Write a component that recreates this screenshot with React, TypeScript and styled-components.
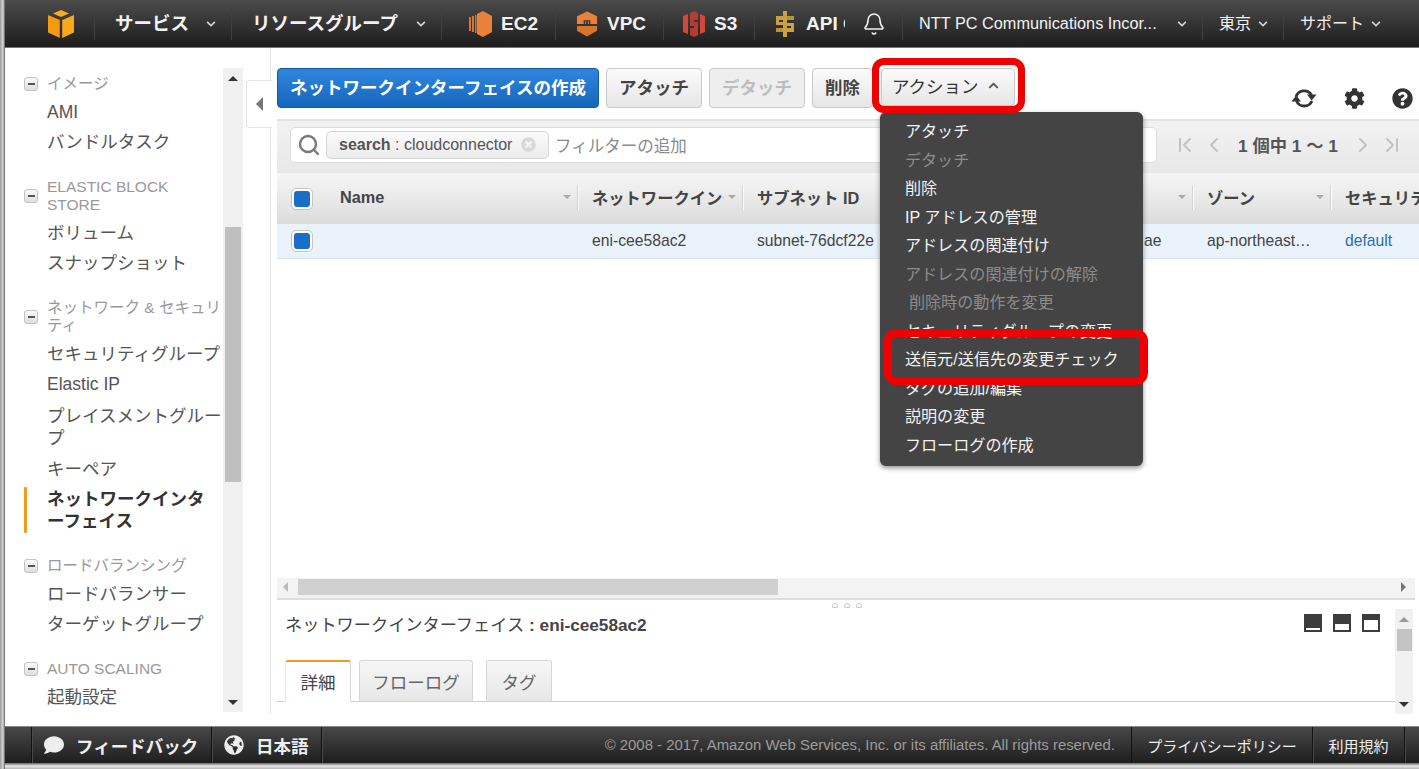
import React from "react";
import styled, { createGlobalStyle } from "styled-components";
import { Bell, ChevronFirst, ChevronLast, ChevronLeft, ChevronRight, Search } from "lucide-react";
import { FaChevronDown, FaChevronUp, FaCog, FaComment, FaGlobeAmericas, FaQuestionCircle, FaTimesCircle } from "react-icons/fa";

const FONT = `"Liberation Sans", "Noto Sans CJK JP", sans-serif`;

const GlobalStyle = createGlobalStyle`
  html, body { margin: 0; padding: 0; background: #fff; }
  body { font-family: ${FONT}; color: #444; }
  * { box-sizing: border-box; }
`;

const Page = styled.div`
  width: 1419px;
  height: 769px;
  overflow: hidden;
  display: flex;
  flex-direction: column;
  padding: 0 0 6px 5px;
  background:
    linear-gradient(90deg, #9a9a9a 0, #d8d8d8 3px, #555 5px, transparent 5px),
    linear-gradient(0deg, #b5b5b5 0, #e8e8e8 3px, #666 6px);
`;

/* ---------- top bar ---------- */
const TopBar = styled.header`
  height: 48px;
  flex-shrink: 0;
  display: flex;
  align-items: center;
  background: linear-gradient(#4b4b4b, #1d1d1d);
  border-bottom: 1px solid #777;
  color: #f2f2f2;
  overflow: hidden;
`;

const NavCell = styled.div<{ $w: number; $bold?: boolean; $size?: number; $pad?: number; $noLine?: boolean }>`
  width: ${(p) => p.$w}px;
  height: 32px;
  flex-shrink: 0;
  display: flex;
  align-items: center;
  justify-content: space-between;
  padding: 0 15px 0 ${(p) => (p.$pad === undefined ? 16 : p.$pad)}px;
  font-size: ${(p) => p.$size || 18.5}px;
  font-weight: ${(p) => (p.$bold ? 700 : 400)};
  white-space: nowrap;
  overflow: hidden;
  border-right: ${(p) => (p.$noLine ? "none" : "1px solid #3f3f3f")};
  svg { flex-shrink: 0; }
`;

const ServiceCell = styled(NavCell)`
  justify-content: flex-start;
  gap: 9px;
  font-size: 19px;
`;

const NavLabel = styled.span`
  margin-top: -3px;
`;

const NavChevron = styled(FaChevronDown)`
  font-size: 10px;
  color: #d4d4d4;
`;

/* ---------- body ---------- */
const Middle = styled.div`
  flex: 1;
  min-height: 0;
  display: flex;
  background: #fff;
`;

const Sidebar = styled.aside`
  width: 238px;
  flex-shrink: 0;
  display: flex;
  padding-bottom: 14px;
`;

const SideList = styled.nav`
  width: 218px;
  padding-top: 27px;
  overflow: hidden;
`;

const GroupHead = styled.div`
  display: flex;
  align-items: center;
  gap: 9px;
  margin: 21px 0 4px;
  padding-left: 19px;
  font-size: 15.5px;
  line-height: 18px;
  color: #999;
  &:first-child { margin-top: 0; }
`;

const Minus = styled.span`
  width: 14px;
  height: 14px;
  flex-shrink: 0;
  display: flex;
  align-items: center;
  justify-content: center;
  border: 1px solid #c4c4c4;
  border-radius: 3px;
  background: linear-gradient(#fafafa, #dedede);
  &::before {
    content: "";
    width: 7px;
    height: 2px;
    background: #555;
  }
`;

const SideItem = styled.div<{ $active?: boolean; $wrap?: boolean }>`
  position: relative;
  padding: ${(p) => (p.$wrap ? "6px 0 5px 42px" : "4px 0 4px 42px")};
  font-size: 17.5px;
  line-height: 22px;
  font-weight: ${(p) => (p.$active ? 700 : 400)};
  color: ${(p) => (p.$active ? "#333" : "#555")};
  ${(p) =>
    p.$active &&
    `padding-right: 15px;
    line-break: anywhere;
    &::before {
      content: "";
      position: absolute;
      left: 19px;
      top: 3px;
      bottom: 3px;
      width: 3px;
      border-radius: 1px;
      background: #f29c1f;
    }`}
`;

const SideScroll = styled.div`
  width: 20px;
  margin-top: 20px;
  display: flex;
  flex-direction: column;
  align-items: center;
  background: #f0f0f0;
`;

const Arrow = styled.span<{ $dir: "up" | "down" | "left" | "right"; $color?: string; $size?: number }>`
  width: 0;
  height: 0;
  flex-shrink: 0;
  border-style: solid;
  border-color: transparent;
  border-width: ${(p) => p.$size || 5}px;
  ${(p) => `border-${{ up: "bottom", down: "top", left: "right", right: "left" }[p.$dir]}-color: ${p.$color || "#333"};`}
  ${(p) => `border-${p.$dir === "up" ? "top" : p.$dir === "down" ? "bottom" : p.$dir === "left" ? "left" : "right"}-width: 0;`}
`;

const ScrollCap = styled.div`
  height: 20px;
  display: flex;
  align-items: center;
  justify-content: center;
`;

const SideThumb = styled.div`
  width: 16px;
  height: 255px;
  margin-top: 139px;
  background: #bfbfbf;
`;

const Spacer = styled.div`
  flex: 1;
`;

const Gutter = styled.div`
  width: 28px;
  flex-shrink: 0;
  padding: 32px 0 0 3px;
  margin-bottom: 12px;
  border-right: 1px solid #e2e2e2;
`;

const CollapseTab = styled.div`
  width: 26px;
  height: 48px;
  display: flex;
  align-items: center;
  justify-content: center;
  background: #fff;
  border: 1px solid #e6e6e6;
  border-right: none;
  border-radius: 4px 0 0 4px;
`;

const Main = styled.main`
  flex: 1;
  min-width: 0;
  display: flex;
  flex-direction: column;
  padding-left: 6px;
`;

const Toolbar = styled.div`
  height: 73px;
  flex-shrink: 0;
  display: flex;
  align-items: flex-start;
  gap: 7px;
  padding: 20px 0 0;
  border-bottom: 2px solid #e2e2e2;
`;

const Button = styled.button<{ $primary?: boolean; $disabled?: boolean }>`
  height: 40px;
  padding: 0 12px 3px;
  font-family: ${FONT};
  font-size: 17.5px;
  font-weight: 700;
  white-space: nowrap;
  border-radius: 4px;
  border: 1px solid ${(p) => (p.$primary ? "#15589f" : "#c8c8c8")};
  background: ${(p) =>
    p.$primary ? "linear-gradient(#2f86de, #1666bb)" : p.$disabled ? "#eeeeee" : "linear-gradient(#fbfbfb, #e6e6e6)"};
  color: ${(p) => (p.$primary ? "#fff" : p.$disabled ? "#bdbdbd" : "#444")};
`;

const ActionWrap = styled.div`
  position: relative;
  margin-left: 1px;
`;

const ActionButton = styled(Button)`
  height: 38px;
  width: 134px;
  padding-left: 10px;
  font-weight: 400;
  display: flex;
  align-items: center;
  gap: 9px;
  color: #333;
  svg { font-size: 11px; color: #555; }
`;

const ToolIcons = styled.div`
  margin-left: auto;
  display: flex;
  align-items: center;
  gap: 27px;
  padding: 18px 6px 0 0;
  color: #333;
  font-size: 21px;
`;

const Ring = styled.div<{ $inset: string; $w: number }>`
  position: absolute;
  inset: ${(p) => p.$inset};
  border: ${(p) => p.$w}px solid #f00000;
  border-radius: 12px;
  pointer-events: none;
  z-index: 3;
`;

const Menu = styled.ul`
  position: absolute;
  left: -1px;
  top: 44px;
  z-index: 2;
  width: 263px;
  height: 354px;
  margin: 0;
  padding: 5px 0 0;
  list-style: none;
  background: #444;
  border-radius: 6px;
  box-shadow: 0 2px 5px rgba(0, 0, 0, 0.45);
`;

const MenuItem = styled.li<{ $off?: boolean; $indent?: boolean }>`
  position: relative;
  height: 28.5px;
  line-height: 28.5px;
  padding-left: ${(p) => (p.$indent ? 29 : 25)}px;
  font-size: 16.1px;
  white-space: nowrap;
  color: ${(p) => (p.$off ? "#8c8c8c" : "#f2f2f2")};
`;

const FilterBar = styled.div`
  height: 51px;
  flex-shrink: 0;
  display: flex;
  align-items: center;
  padding: 0 0 4px 13px;
  background: linear-gradient(#f2f2f2, #e8e8e8);
`;

const SearchBox = styled.div`
  width: 867px;
  height: 36px;
  flex-shrink: 0;
  display: flex;
  align-items: center;
  padding: 0 6px;
  background: #fff;
  border: 1px solid #ddd;
  border-radius: 5px;
  color: #7a7a7a;
`;

const Tag = styled.div`
  width: 223px;
  height: 28px;
  margin: 0 6px 0 5px;
  display: flex;
  align-items: center;
  justify-content: space-between;
  padding: 0 12px;
  font-size: 16px;
  color: #555;
  white-space: nowrap;
  background: linear-gradient(#fafafa, #ececec);
  border: 1px solid #d6d6d6;
  border-radius: 5px;
  b { font-weight: 700; }
  svg { font-size: 15px; color: #d8d8d8; }
`;

const Placeholder = styled.span`
  font-size: 16.5px;
  color: #8a8a8a;
`;

const Pager = styled.div`
  display: flex;
  align-items: center;
  gap: 5px;
  margin-left: 16px;
  color: #c2c2c2;
`;

const PagerText = styled.span`
  margin: 0 8px 0 7px;
  font-size: 17.3px;
  font-weight: 700;
  color: #555;
  white-space: nowrap;
`;

const COLS = "50px 252px 165px 387px 63px 138px 138px 200px";

const HeadRow = styled.div`
  height: 52px;
  flex-shrink: 0;
  display: grid;
  grid-template-columns: ${COLS};
  background: linear-gradient(#f6f6f6, #dcdcdc);
  border-top: 1px solid #e4e4e4;
`;

const HeadCell = styled.div`
  position: relative;
  min-width: 0;
  display: flex;
  align-items: center;
  gap: 4px;
  padding: 0 8px 3px 13px;
  font-size: 16.3px;
  font-weight: 700;
  color: #444;
  &::after {
    content: "";
    position: absolute;
    right: 0;
    top: 12px;
    bottom: 14px;
    width: 1px;
    background: #fbfbfb;
    box-shadow: -1px 0 0 #d4d4d4;
  }
`;

const HeadLabel = styled.span`
  flex: 1;
  min-width: 0;
  overflow: hidden;
  white-space: nowrap;
`;

const CheckCell = styled.div`
  display: flex;
  align-items: center;
  padding-left: 14px;
`;

const CheckBox = styled.span`
  width: 22px;
  height: 22px;
  padding: 2px;
  display: block;
  background: #fff;
  border: 1px solid #c4c4c4;
  border-radius: 5px;
  &::before {
    content: "";
    display: block;
    width: 100%;
    height: 100%;
    border-radius: 3px;
    background: #1a6dc8;
  }
`;

const DataRow = styled.div`
  height: 35px;
  flex-shrink: 0;
  display: grid;
  grid-template-columns: ${COLS};
  background: #eaf3fc;
  border-bottom: 1px solid #dfe3e6;
`;

const DataCell = styled.div<{ $link?: boolean; $pad?: number }>`
  min-width: 0;
  display: flex;
  align-items: center;
  padding: 0 ${(p) => (p.$pad === undefined ? 20 : p.$pad)}px 0 13px;
  font-size: 15.7px;
  color: ${(p) => (p.$link ? "#2b6cb0" : "#444")};
  white-space: nowrap;
`;

const Clip = styled.span`
  overflow: hidden;
  text-overflow: ellipsis;
`;

const TableBlank = styled.div`
  flex: 1;
`;

const HScroll = styled.div`
  height: 22px;
  flex-shrink: 0;
  margin-right: 4px;
  display: flex;
  align-items: center;
  padding: 0 9px 3px 6px;
  background: #f3f3f3;
  border-bottom: 2px solid #dedede;
`;

const HThumb = styled.div`
  width: 480px;
  height: 16px;
  margin-left: 10px;
  background: #d0d0d0;
`;

const Detail = styled.section`
  position: relative;
  height: 114px;
  flex-shrink: 0;
  display: flex;
  margin: 0 6px 12px 0;
`;

const DetailBody = styled.div`
  flex: 1;
  min-width: 0;
  display: flex;
  flex-direction: column;
  padding: 12px 0 0 8px;
`;

const DetailHead = styled.div`
  display: flex;
  align-items: center;
  height: 22px;
  font-size: 17.2px;
  color: #444;
  white-space: nowrap;
  b { font-weight: 700; margin-left: 5px; }
`;

const PaneIcons = styled.div`
  margin-left: auto;
  margin-right: 15px;
  display: flex;
  gap: 11px;
`;

const PaneIcon = styled.span<{ $h: number }>`
  width: 18px;
  height: 18px;
  display: flex;
  flex-direction: column;
  justify-content: flex-end;
  padding: 2px;
  background: #3d3d3d;
  &::before {
    content: "";
    height: ${(p) => p.$h}px;
    background: #fff;
  }
`;

const DragDots = styled.div`
  position: absolute;
  left: 555px;
  top: 3px;
  display: flex;
  gap: 6px;
  span {
    width: 6px;
    height: 5px;
    border: 1px solid #c8c8c8;
    border-radius: 3px 3px 1px 1px;
  }
`;

const Tabs = styled.div`
  height: 43px;
  margin: 25px 0 0 -8px;
  padding-left: 8px;
  display: flex;
  align-items: flex-end;
  gap: 8px;
  border-bottom: 1px solid #cfcfcf;
`;

const Tab = styled.div<{ $active?: boolean; $w: number; $gap?: number }>`
  width: ${(p) => p.$w}px;
  height: 42px;
  margin-bottom: -1px;
  margin-left: ${(p) => p.$gap || 0}px;
  display: flex;
  align-items: center;
  justify-content: center;
  font-size: 17.5px;
  color: ${(p) => (p.$active ? "#444" : "#666")};
  background: ${(p) => (p.$active ? "#fff" : "linear-gradient(#f6f6f6, #e8e8e8)")};
  border: 1px solid #d6d6d6;
  border-top: ${(p) => (p.$active ? "2px solid #f29c1f" : "1px solid #d6d6d6")};
  border-bottom: ${(p) => (p.$active ? "1px solid #fff" : "1px solid #cfcfcf")};
  border-left-color: ${(p) => (p.$active ? "#e8e8e8" : "#d6d6d6")};
  border-radius: 3px 3px 0 0;
`;

const DetailScroll = styled.div`
  width: 18px;
  flex-shrink: 0;
  margin-top: 9px;
  display: flex;
  flex-direction: column;
  align-items: center;
  background: #f1f1f1;
`;

const DetailThumb = styled.div`
  width: 15px;
  height: 22px;
  background: #c4c4c4;
`;

/* ---------- footer ---------- */
const Footer = styled.footer`
  height: 37px;
  flex-shrink: 0;
  display: flex;
  align-items: stretch;
  background: linear-gradient(#484848, #1e1e1e);
  border-top: 1px solid #888;
  color: #eee;
  white-space: nowrap;
`;

const FootCell = styled.div<{ $w: number; $plain?: boolean; $noLine?: boolean }>`
  width: ${(p) => p.$w}px;
  flex-shrink: 0;
  display: flex;
  align-items: center;
  justify-content: ${(p) => (p.$plain ? "center" : "flex-start")};
  gap: 12px;
  padding-left: ${(p) => (p.$plain ? 0 : 12)}px;
  font-weight: ${(p) => (p.$plain ? 400 : 700)};
  font-size: ${(p) => (p.$plain ? 15 : 17.5)}px;
  border-right: ${(p) => (p.$noLine ? "none" : "1px solid #111")};
  box-shadow: ${(p) => (p.$noLine ? "none" : "1px 0 0 #4a4a4a")};
  svg { font-size: 20px; }
`;

const Copy = styled.div`
  flex: 1;
  display: flex;
  align-items: center;
  justify-content: flex-end;
  padding-right: 16px;
  font-size: 14.9px;
  font-weight: 400;
  color: #9c9c9c;
  border-right: 1px solid #111;
`;

/* ---------- drawn logos ---------- */
const CubeLogo = () => (
  <svg width="28" height="28" viewBox="0 0 28 28">
    <path d="M14 0 L22 3.5 L14 7 L6 3.5 Z" fill="#f9ac1e" />
    <path d="M1 5 L12.8 10 V28 L1 22.5 Z" fill="#f39a11" />
    <path d="M27 5 L15.2 10 V28 L27 22.5 Z" fill="#f7a81b" />
  </svg>
);

const Ec2Icon = () => (
  <svg width="23" height="26" viewBox="0 0 23 26">
    <path d="M8 3 L14 0 L23 5 V21 L14 26 L8 23 Z" fill="#e8823a" />
    <path d="M0 6 H2 V20 H0 Z M3 5 H5 V21 H3 Z M6 4 H7.5 V22 H6 Z" fill="#d9742c" />
  </svg>
);

const VpcIcon = () => (
  <svg width="22" height="26" viewBox="0 0 23 26">
    <path d="M11.5 0 L22 5 V13 H15 V9 H8 V13 H1 V5 Z" fill="#e8823a" />
    <path d="M1 15 H22 V20 L11.5 26 L1 20 Z" fill="#d9742c" />
    <path d="M9.5 10 H10.5 V13 H9.5 Z M12.5 10 H13.5 V13 H12.5 Z" fill="#e8823a" />
  </svg>
);

const S3Icon = () => (
  <svg width="22" height="26" viewBox="0 0 22 26">
    <path d="M0 5 L5 3 V23 L0 21 Z M22 5 L17 3 V23 L22 21 Z" fill="#d4483b" />
    <path d="M7 2 L11 0 L15 2 V9 H11 V11 H15 V24 L11 26 L7 24 V17 H11 V15 H7 Z" fill="#b93a30" />
  </svg>
);

const ApiIcon = () => (
  <svg width="24" height="26" viewBox="0 0 24 26">
    <path d="M10 0 H14 V26 H10 Z" fill="#c9a23f" />
    <path d="M3 5 H10 V9 H6 V11 H10 V14 H3 Z M14 12 H21 V21 H14 V17 H18 V15 H14 Z" fill="#c9a23f" />
    <path d="M14 5 H21 V9 H14 Z M3 17 H10 V21 H3 Z" fill="#b8923a" />
  </svg>
);

const RefreshIcon = () => (
  <svg width="26" height="24" viewBox="0 0 26 24">
    <path d="M5 11 A8.5 8.5 0 0 1 20.5 9" fill="none" stroke="#333" strokeWidth="2.8" />
    <path d="M21 15 A8.5 8.5 0 0 1 5.5 15" fill="none" stroke="#333" strokeWidth="2.8" />
    <path d="M16 8.5 H25.5 L20.7 14.5 Z M0.5 15.5 H10 L5.2 9.5 Z" fill="#333" />
  </svg>
);

const sideGroups = [
  { head: "イメージ", items: ["AMI", "バンドルタスク"] },
  { head: "ELASTIC BLOCK STORE", items: ["ボリューム", "スナップショット"] },
  {
    head: "ネットワーク & セキュリティ",
    items: ["セキュリティグループ", "Elastic IP", "プレイスメントグループ", "キーペア", "ネットワークインターフェイス"],
  },
  { head: "ロードバランシング", items: ["ロードバランサー", "ターゲットグループ"] },
  { head: "AUTO SCALING", items: ["起動設定"] },
];

const menuItems: { label: string; off?: boolean; indent?: boolean; ring?: boolean }[] = [
  { label: "アタッチ" },
  { label: "デタッチ", off: true },
  { label: "削除" },
  { label: "IP アドレスの管理" },
  { label: "アドレスの関連付け" },
  { label: "アドレスの関連付けの解除", off: true },
  { label: "削除時の動作を変更", off: true, indent: true },
  { label: "セキュリティグループの変更" },
  { label: "送信元/送信先の変更チェック", ring: true },
  { label: "タグの追加/編集" },
  { label: "説明の変更" },
  { label: "フローログの作成" },
];

const headers = ["Name", "ネットワークインターフェイス ID", "サブネット ID", "", "ゾーン", "セキュリティグループ"];

export default function App() {
  return (
    <Page>
      <GlobalStyle />
      <TopBar>
        <NavCell $w={90} $pad={42}>
          <CubeLogo />
        </NavCell>
        <NavCell $w={137} $pad={20} $bold>
          <NavLabel>サービス</NavLabel>
          <NavChevron />
        </NavCell>
        <NavCell $w={210} $pad={20} $bold>
          <NavLabel>リソースグループ</NavLabel>
          <NavChevron />
        </NavCell>
        <ServiceCell $w={114} $pad={27} $bold>
          <Ec2Icon />
          EC2
        </ServiceCell>
        <ServiceCell $w={108} $pad={20} $bold>
          <VpcIcon />
          VPC
        </ServiceCell>
        <ServiceCell $w={91} $pad={19} $bold>
          <S3Icon />
          S3
        </ServiceCell>
        <ServiceCell $w={90} $pad={18} $bold $noLine>
          <ApiIcon />
          API Gateway
        </ServiceCell>
        <NavCell $w={58} $pad={17}>
          <Bell size={24} strokeWidth={1.6} />
        </NavCell>
        <NavCell $w={300} $size={16.3}>
          <span>NTT PC Communications Incor...</span>
          <NavChevron />
        </NavCell>
        <NavCell $w={81} $size={16}>
          <NavLabel>東京</NavLabel>
          <NavChevron />
        </NavCell>
        <NavCell $w={112} $size={16} $noLine>
          <NavLabel>サポート</NavLabel>
          <NavChevron />
        </NavCell>
      </TopBar>

      <Middle>
        <Sidebar>
          <SideList>
            {sideGroups.map((g) => (
              <React.Fragment key={g.head}>
                <GroupHead>
                  <Minus />
                  <span>{g.head}</span>
                </GroupHead>
                {g.items.map((it) => (
                  <SideItem key={it} $active={it === "ネットワークインターフェイス"} $wrap={it === "プレイスメントグループ"}>
                    {it}
                  </SideItem>
                ))}
              </React.Fragment>
            ))}
          </SideList>
          <SideScroll>
            <ScrollCap>
              <Arrow $dir="up" />
            </ScrollCap>
            <SideThumb />
            <Spacer />
            <ScrollCap>
              <Arrow $dir="down" />
            </ScrollCap>
          </SideScroll>
        </Sidebar>

        <Gutter>
          <CollapseTab>
            <Arrow $dir="left" $color="#777" $size={7} />
          </CollapseTab>
        </Gutter>

        <Main>
          <Toolbar>
            <Button $primary>ネットワークインターフェイスの作成</Button>
            <Button>アタッチ</Button>
            <Button $disabled>デタッチ</Button>
            <Button>削除</Button>
            <ActionWrap>
              <ActionButton>
                アクション
                <FaChevronUp />
              </ActionButton>
              <Ring $inset="-10px -10px -7px -9px" $w={7} />
              <Menu>
                {menuItems.map((m) => (
                  <MenuItem key={m.label} $off={m.off} $indent={m.indent}>
                    {m.label}
                    {m.ring && <Ring $inset="-16px -5px -11px 4px" $w={8} />}
                  </MenuItem>
                ))}
              </Menu>
            </ActionWrap>
            <ToolIcons>
              <RefreshIcon />
              <FaCog />
              <FaQuestionCircle />
            </ToolIcons>
          </Toolbar>

          <FilterBar>
            <SearchBox>
              <Search size={24} strokeWidth={2.4} />
              <Tag>
                <span>
                  <b>search</b> : cloudconnector
                </span>
                <FaTimesCircle />
              </Tag>
              <Placeholder>フィルターの追加</Placeholder>
            </SearchBox>
            <Pager>
              <ChevronFirst size={24} />
              <ChevronLeft size={24} />
              <PagerText>1 個中 1 ～ 1</PagerText>
              <ChevronRight size={24} />
              <ChevronLast size={24} />
            </Pager>
          </FilterBar>

          <HeadRow>
            <CheckCell>
              <CheckBox />
            </CheckCell>
            {headers.map((h, i) => (
              <HeadCell key={i}>
                <HeadLabel>{h}</HeadLabel>
                {i < 5 && <Arrow $dir="down" $color="#aaa" $size={4} />}
              </HeadCell>
            ))}
          </HeadRow>
          <DataRow>
            <CheckCell>
              <CheckBox />
            </CheckCell>
            <DataCell />
            <DataCell>eni-cee58ac2</DataCell>
            <DataCell>subnet-76dcf22e</DataCell>
            <DataCell $pad={0}>ae</DataCell>
            <DataCell>
              <Clip>ap-northeast-1a</Clip>
            </DataCell>
            <DataCell $link>default</DataCell>
          </DataRow>
          <TableBlank />

          <HScroll>
            <Arrow $dir="left" $color="#bbb" />
            <HThumb />
            <Spacer />
            <Arrow $dir="right" $color="#777" />
          </HScroll>

          <Detail>
            <DragDots>
              <span />
              <span />
              <span />
            </DragDots>
            <DetailBody>
              <DetailHead>
                <span>
                  ネットワークインターフェイス<b>: eni-cee58ac2</b>
                </span>
                <PaneIcons>
                  <PaneIcon $h={2} />
                  <PaneIcon $h={6} />
                  <PaneIcon $h={10} />
                </PaneIcons>
              </DetailHead>
              <Tabs>
                <Tab $active $w={66}>
                  詳細
                </Tab>
                <Tab $w={114}>フローログ</Tab>
                <Tab $w={66} $gap={5}>
                  タグ
                </Tab>
              </Tabs>
            </DetailBody>
            <DetailScroll>
              <ScrollCap>
                <Arrow $dir="up" $color="#999" />
              </ScrollCap>
              <DetailThumb />
              <Spacer />
              <ScrollCap>
                <Arrow $dir="down" />
              </ScrollCap>
            </DetailScroll>
          </Detail>
        </Main>
      </Middle>

      <Footer>
        <FootCell $w={27} />
        <FootCell $w={180}>
          <FaComment />
          フィードバック
        </FootCell>
        <FootCell $w={110}>
          <FaGlobeAmericas />
          日本語
        </FootCell>
        <Copy>© 2008 - 2017, Amazon Web Services, Inc. or its affiliates. All rights reserved.</Copy>
        <FootCell $w={181} $plain>
          プライバシーポリシー
        </FootCell>
        <FootCell $w={92} $plain>
          利用規約
        </FootCell>
        <FootCell $w={14} $plain $noLine />
      </Footer>
    </Page>
  );
}
